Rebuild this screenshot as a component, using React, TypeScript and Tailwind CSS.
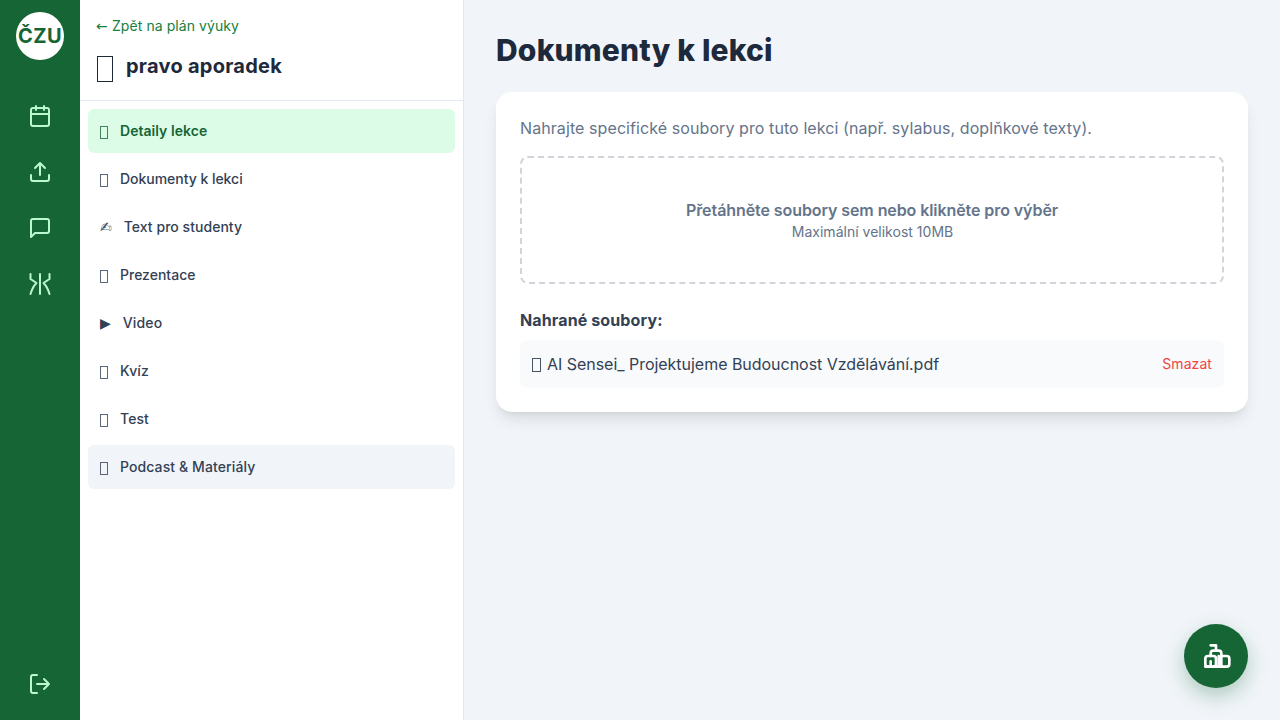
import React from "react";

type NavItem = { glyph?: string; label: string; state: string; tracking: string };

const navItems: NavItem[] = [
  { label: "Detaily lekce", state: "active", tracking: "tracking-[0.04px]" },
  { label: "Dokumenty k lekci", state: "", tracking: "tracking-[-0.03px]" },
  { glyph: "✍\uFE0E", label: "Text pro studenty", state: "", tracking: "tracking-[0.04px]" },
  { label: "Prezentace", state: "", tracking: "tracking-normal" },
  { glyph: "▶\uFE0E", label: "Video", state: "", tracking: "tracking-[0.15px]" },
  { label: "Kvíz", state: "", tracking: "tracking-[0.1px]" },
  { label: "Test", state: "", tracking: "tracking-[0.1px]" },
  { label: "Podcast & Materiály", state: "hover", tracking: "tracking-[0.1px]" },
];

const itemStyle: Record<string, string> = {
  active: "bg-[#dcfce7] text-[#166534] font-semibold",
  hover: "bg-[#f1f5f9] text-[#334155] font-medium",
  "": "text-[#334155] font-medium",
};

function RailIcon({ children }: { children: React.ReactNode }) {
  return (
    <button className="flex h-10 w-10 items-center justify-center text-[#bbf7d0]">
      <svg width="24" height="24" viewBox="0 0 24 24" fill="none" stroke="currentColor" strokeWidth="2" strokeLinecap="round" strokeLinejoin="round">
        {children}
      </svg>
    </button>
  );
}

export default function App() {
  return (
    <div className="flex h-screen overflow-hidden bg-[#f1f5f9] font-['Inter',sans-serif] text-[#334155]">
      <nav className="flex w-20 shrink-0 flex-col items-center bg-[#166534] pt-3 pb-4">
        <div className="flex h-12 w-12 items-center justify-center rounded-full bg-white text-xl font-bold tracking-[0.4px] text-[#166534]">ČZU</div>
        <div className="mt-9 flex flex-1 flex-col gap-4">
          <RailIcon>
            <rect x="3" y="4" width="18" height="18" rx="2" />
            <path d="M16 2v4M8 2v4M3 10h18" />
          </RailIcon>
          <RailIcon>
            <path d="M21 15v4a2 2 0 0 1-2 2H5a2 2 0 0 1-2-2v-4" />
            <path d="M17 8l-5-5-5 5M12 3v12" />
          </RailIcon>
          <RailIcon>
            <path d="M21 15a2 2 0 0 1-2 2H7l-4 4V5a2 2 0 0 1 2-2h14a2 2 0 0 1 2 2z" />
          </RailIcon>
          <RailIcon>
            <path d="M12 2v20M2.5 2v5l6 4q-4 4-6 11M21.5 2v5l-6 4q4 4 6 11" />
          </RailIcon>
        </div>
        <RailIcon>
          <path d="M9 21H5a2 2 0 0 1-2-2V5a2 2 0 0 1 2-2h4" />
          <path d="M16 17l5-5-5-5M21 12H9" />
        </RailIcon>
      </nav>

      <aside className="flex w-96 shrink-0 flex-col border-r border-[#e2e8f0] bg-white">
        <header className="border-b border-[#e2e8f0] p-4">
          <button className="mb-3 flex h-5 items-center text-sm text-[#15803d]">
            <span className="w-4 text-left font-['DejaVu_Sans',sans-serif]">←</span>
            <span className="tracking-[0.07px]">Zpět na plán výuky</span>
          </button>
          <div className="flex h-9 items-center">
            <span className="mt-1.5 mr-[13px] ml-px h-[26px] w-4 border border-[#1e293b]" />
            <h2 className="text-xl font-bold tracking-[0.26px] text-[#1e293b]">pravo aporadek</h2>
          </div>
        </header>
        <div className="flex flex-col gap-1 p-2">
          {navItems.map((item) => (
            <button key={item.label} className={`flex h-11 items-center rounded-md p-3 text-left text-sm ${itemStyle[item.state]}`}>
              {item.glyph ? (
                <span className="mr-3 font-['DejaVu_Sans',sans-serif] font-normal">{item.glyph}</span>
              ) : (
                <span className="mt-[3px] mr-3 h-[13px] w-2 border border-current opacity-80" />
              )}
              <span className={item.tracking}>{item.label}</span>
            </button>
          ))}
        </div>
      </aside>

      <main className="flex-1 p-8">
        <h1 className="mb-6 text-3xl font-extrabold tracking-[0.19px] text-[#1e293b]">Dokumenty k lekci</h1>
        <section className="rounded-2xl bg-white p-6 shadow-lg">
          <p className="mb-4 tracking-[0.085px] text-[#64748b]">Nahrajte specifické soubory pro tuto lekci (např. sylabus, doplňkové texty).</p>
          <div className="rounded-lg border-2 border-dashed border-[#d1d5db] p-10 text-center text-[#64748b]">
            <p className="font-semibold tracking-[-0.08px]">Přetáhněte soubory sem nebo klikněte pro výběr</p>
            <p className="pl-px text-sm tracking-[0.01px]">Maximální velikost 10MB</p>
          </div>
          <h3 className="mt-6 mb-2 font-bold tracking-[0.12px]">Nahrané soubory:</h3>
          <div className="flex h-12 items-center justify-between rounded-lg bg-[#f8fafc] p-3">
            <div className="flex items-center">
              <span className="mt-0.5 mr-1.5 h-3.5 w-[9px] border border-current opacity-90" />
              <span className="tracking-[-0.03px]">AI Sensei_ Projektujeme Budoucnost Vzdělávání.pdf</span>
            </div>
            <button className="text-sm tracking-[0.08px] text-[#ef4444]">Smazat</button>
          </div>
        </section>
      </main>

      <button className="fixed right-8 bottom-8 flex h-16 w-16 items-center justify-center rounded-full bg-[#166534] text-white shadow-[0_8px_20px_rgba(22,101,52,0.3)]">
        <svg width="32" height="32" viewBox="0 0 24 24" fill="none" stroke="currentColor" strokeWidth="2" strokeLinecap="round" strokeLinejoin="round">
          <path d="M12 8V4H8" />
          <rect x="4" y="12" width="8" height="8" rx="2" />
          <path d="M8 12v-2a2 2 0 0 1 2-2h4a2 2 0 0 1 2 2v10" />
          <path d="M14 12v8M8 16v4M4 20h16a2 2 0 0 0 2-2v-4a2 2 0 0 0-2-2h-4" />
        </svg>
      </button>
    </div>
  );
}
